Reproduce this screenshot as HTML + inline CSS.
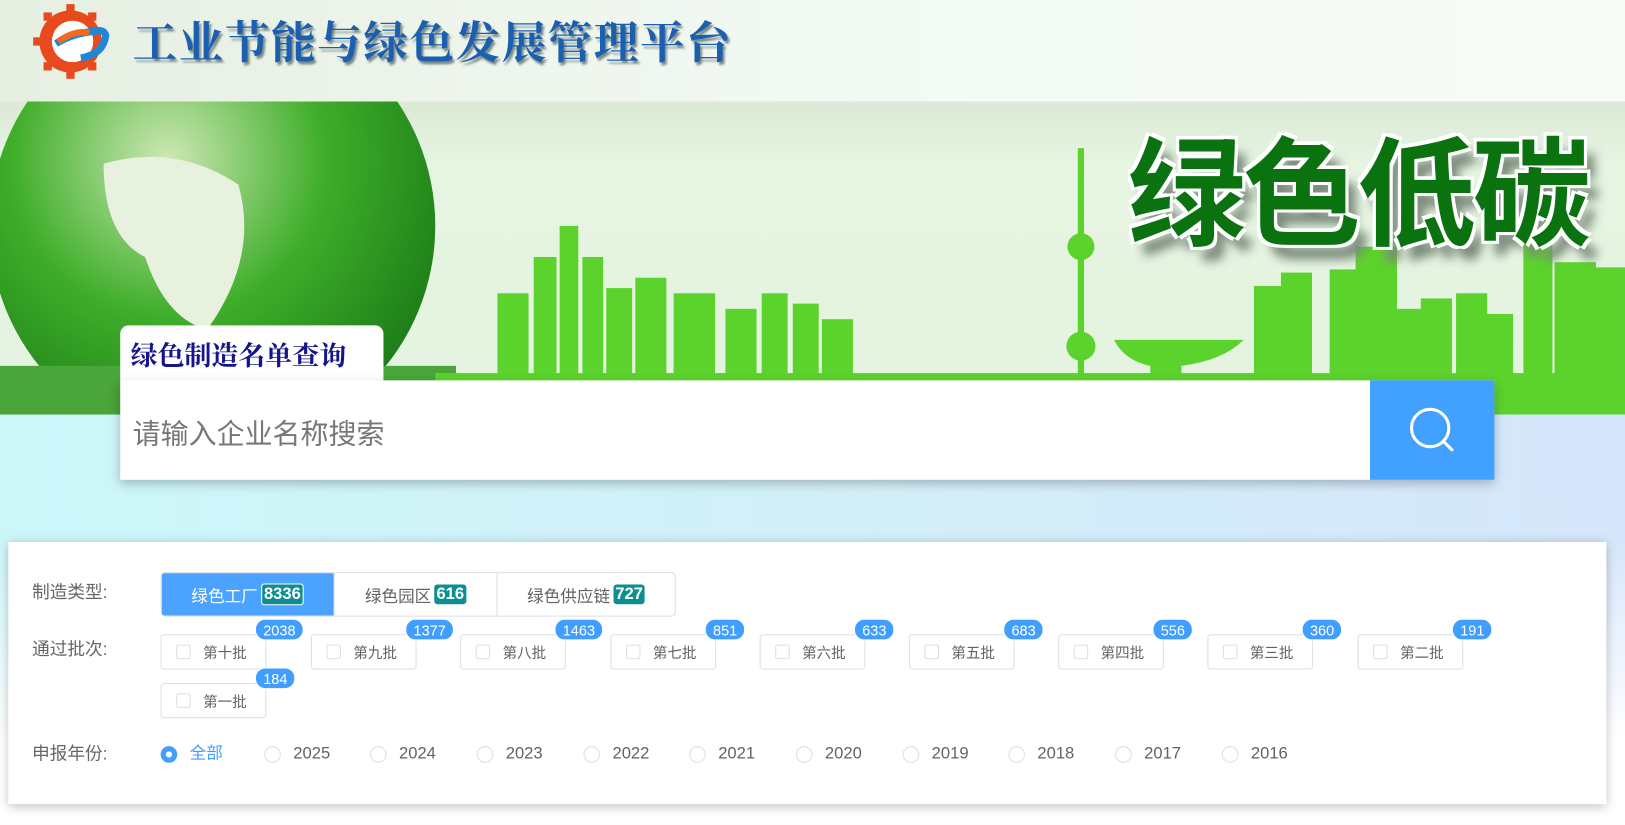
<!DOCTYPE html>
<html><head><meta charset="utf-8"><style>
*{margin:0;padding:0;box-sizing:border-box}
body{width:1625px;height:824px;overflow:hidden;position:relative;font-family:"Liberation Sans","Noto Sans CJK SC",sans-serif;background:#fff}
#w{position:absolute;left:0;top:0;width:1568px;height:796px;transform:scale(1.03635);transform-origin:0 0}
.hdr{position:absolute;left:0;top:0;width:1568px;height:98px;background:linear-gradient(90deg,#e6efe2 0%,#eef5ec 30%,#f4faf6 60%,#f6fbf8 100%)}
.ttl{position:absolute;left:128px;top:17px;font-size:43px;line-height:1;font-weight:bold;color:#1a5fb0;letter-spacing:1.5px;text-shadow:2px 3px 2px #7a8a88;font-family:"Noto Serif CJK SC","Liberation Serif",serif}
.ban{position:absolute;left:0;top:98px;width:1568px;height:304px;background:linear-gradient(180deg,#dbe9d6 0%,#e6f4e2 20%,#e4f4df 100%);overflow:hidden}
.lower{position:absolute;left:0;top:400px;width:1568px;height:396px;background:linear-gradient(90deg,#ccf7f9 0%,#d2f0f8 50%,#d6e6fb 100%)}
.lower::after{content:"";position:absolute;left:0;top:120px;width:100%;height:276px;background:linear-gradient(180deg,rgba(255,255,255,0),#fff 70%)}
.big{position:absolute;left:1088px;top:24px;line-height:1;font-size:114px;font-weight:bold;color:#0a7310;font-family:"Noto Sans CJK SC",sans-serif;text-shadow:3px 3px 0 #fff,-3px -3px 0 #fff,3px -3px 0 #fff,-3px 3px 0 #fff,10px 14px 10px #7a8a7a;letter-spacing:-3px}
.tab{position:absolute;left:116px;top:314px;width:254px;height:54px;background:#fff;border-radius:8px 8px 0 0;font-size:26px;font-weight:bold;color:#14148c;padding:12px 0 0 10px;line-height:1.2;font-family:"Noto Serif CJK SC",serif}
.sbox{position:absolute;left:116px;top:367px;width:1326px;height:96px;background:#fff;box-shadow:0 4px 10px rgba(0,0,0,.25)}
.sbox span{position:absolute;left:12px;top:30px;font-size:27px;color:#777}
.sbtn{position:absolute;right:0;top:0;width:120px;height:96px;background:#42a0ff}
.card{position:absolute;left:8px;top:523px;width:1542px;height:253px;background:#fff;box-shadow:0 2px 10px rgba(0,0,0,.25)}
.lbl{position:absolute;left:23px;font-size:17px;color:#666;line-height:20px}
.grp{position:absolute;left:147px;top:29px;height:43px;display:flex;border:1px solid #dcdfe6;border-radius:4px;overflow:hidden}
.grp div{height:41px;font-size:16px;color:#606266;display:flex;align-items:center;justify-content:center;border-left:1px solid #dcdfe6}
.grp div:first-child{border:none;background:#4ba3ff;color:#fff}
.n{background:#0e8e8e;color:#fff;font-weight:bold;border-radius:3px;padding:0 2px;margin-left:3px;font-size:16px;line-height:19px}
.first .n{border:1px solid #fff}
.cb{position:absolute;width:102px;height:34px;border:1px solid #dcdfe6;border-radius:3px;font-size:14px;color:#606266}
.cb i{position:absolute;left:14px;top:9px;width:14px;height:14px;border:1px solid #dcdfe6;border-radius:2px}
.cb span{position:absolute;left:40px;top:7px}
.bd{position:absolute;left:90px;top:-16px;background:#409eff;color:#fff;font-size:14px;font-weight:normal;height:21px;line-height:20px;padding:0 7px;border-radius:10px;border:1px solid #fff;white-space:nowrap}
.rd{position:absolute;top:195px;font-size:16px;color:#606266;height:20px;line-height:20px}
.rd i{position:absolute;left:0;top:2px;width:16px;height:16px;border:1px solid #dcdfe6;border-radius:50%}
.rd span{position:absolute;left:28px;top:0;white-space:nowrap}
</style></head><body><div id="w">
<div class="hdr">
<svg style="position:absolute;left:30px;top:2px" width="80" height="76" viewBox="0 0 80 76">
<g fill="#e8491d"><circle cx="38" cy="38" r="30"/>
<rect x="34" y="2" width="8" height="8"/><rect x="34" y="66" width="8" height="8"/><rect x="2" y="34" width="8" height="8"/>
<rect x="12" y="10" width="8" height="8"/><rect x="12" y="58" width="8" height="8"/><rect x="55" y="10" width="8" height="8"/><rect x="55" y="58" width="8" height="8"/></g>
<circle cx="40" cy="38" r="20" fill="#fff"/>
<path d="M24 40 Q40 30 62 28 Q70 26 72 32 Q70 50 48 54" fill="none" stroke="#1e88d6" stroke-width="7"/>
<path d="M26 38 Q44 26 56 30" fill="none" stroke="#f36a1f" stroke-width="6"/>
</svg>
<div class="ttl">工业节能与绿色发展管理平台</div>
</div>
<div class="ban">
<svg width="1568" height="304" style="position:absolute;left:0;top:0">
<defs><radialGradient id="g" cx="0.4" cy="0.35" r="0.7"><stop offset="0" stop-color="#cde8b4"/><stop offset="0.5" stop-color="#3fae2a"/><stop offset="1" stop-color="#1a7a16"/></radialGradient></defs>
<circle cx="205" cy="120" r="215" fill="url(#g)"/>
<path d="M100 60 Q170 40 230 80 Q250 150 200 220 Q160 210 140 150 Q100 130 100 60Z" fill="#e8f1de"/>
<rect x="0" y="255" width="440" height="49" fill="#4aa53a"/>
<g fill="#5cd22c">
<rect x="480" y="185" width="30" height="119"/><rect x="515" y="150" width="22" height="154"/><rect x="540" y="120" width="18" height="184"/><rect x="562" y="150" width="20" height="154"/><rect x="585" y="180" width="25" height="124"/><rect x="613" y="170" width="30" height="134"/><rect x="650" y="185" width="40" height="119"/><rect x="700" y="200" width="30" height="104"/><rect x="735" y="185" width="25" height="119"/><rect x="765" y="195" width="25" height="109"/><rect x="793" y="210" width="30" height="94"/>
<rect x="1040" y="45" width="6" height="250"/><circle cx="1043" cy="140" r="13"/><circle cx="1043" cy="236" r="14"/>
<path d="M1075 230 L1200 230 Q1180 250 1140 255 L1140 304 L1110 304 L1110 255 Q1085 250 1075 230Z"/>
<rect x="1210" y="178" width="30" height="126"/><rect x="1236" y="165" width="30" height="139"/><rect x="1283" y="162" width="30" height="142"/><rect x="1308" y="140" width="40" height="164"/><rect x="1340" y="200" width="32" height="104"/><rect x="1371" y="190" width="30" height="114"/><rect x="1405" y="185" width="30" height="119"/><rect x="1420" y="205" width="40" height="99"/><rect x="1470" y="135" width="28" height="169"/><rect x="1500" y="155" width="40" height="149"/><rect x="1540" y="160" width="30" height="144"/>
<rect x="420" y="262" width="1150" height="42"/>
</g>
</svg>
<div class="big">绿色低碳</div>
</div>
<div class="lower"></div>
<div class="tab">绿色制造名单查询</div>
<div class="sbox"><span>请输入企业名称搜索</span>
<div class="sbtn"><svg width="120" height="96"><circle cx="58" cy="46" r="18" fill="none" stroke="#fff" stroke-width="3"/><line x1="71" y1="59" x2="79" y2="67" stroke="#fff" stroke-width="3" stroke-linecap="round"/></svg></div></div>
<div class="card">
<div class="lbl" style="top:39px">制造类型:</div>
<div class="grp"><div class="first" style="width:166px">绿色工厂<span class="n">8336</span></div><div style="width:157px">绿色园区<span class="n">616</span></div><div style="width:172px">绿色供应链<span class="n">727</span></div></div>
<div class="lbl" style="top:94px">通过批次:</div>
<div class="cb" style="left:147px;top:89px"><i></i><span>第十批</span><b class="bd">2038</b></div>
<div class="cb" style="left:292px;top:89px"><i></i><span>第九批</span><b class="bd">1377</b></div>
<div class="cb" style="left:436px;top:89px"><i></i><span>第八批</span><b class="bd">1463</b></div>
<div class="cb" style="left:581px;top:89px"><i></i><span>第七批</span><b class="bd">851</b></div>
<div class="cb" style="left:725px;top:89px"><i></i><span>第六批</span><b class="bd">633</b></div>
<div class="cb" style="left:869px;top:89px"><i></i><span>第五批</span><b class="bd">683</b></div>
<div class="cb" style="left:1013px;top:89px"><i></i><span>第四批</span><b class="bd">556</b></div>
<div class="cb" style="left:1157px;top:89px"><i></i><span>第三批</span><b class="bd">360</b></div>
<div class="cb" style="left:1302px;top:89px"><i></i><span>第二批</span><b class="bd">191</b></div>
<div class="cb" style="left:147px;top:136px"><i></i><span>第一批</span><b class="bd">184</b></div>
<div class="lbl" style="top:195px">申报年份:</div>
<div class="rd" style="left:147px"><i style="border:5px solid #409eff;background:#fff"></i><span style="color:#409eff">全部</span></div>
<div class="rd" style="left:247px"><i></i><span>2025</span></div>
<div class="rd" style="left:349px"><i></i><span>2024</span></div>
<div class="rd" style="left:452px"><i></i><span>2023</span></div>
<div class="rd" style="left:555px"><i></i><span>2022</span></div>
<div class="rd" style="left:657px"><i></i><span>2021</span></div>
<div class="rd" style="left:760px"><i></i><span>2020</span></div>
<div class="rd" style="left:863px"><i></i><span>2019</span></div>
<div class="rd" style="left:965px"><i></i><span>2018</span></div>
<div class="rd" style="left:1068px"><i></i><span>2017</span></div>
<div class="rd" style="left:1171px"><i></i><span>2016</span></div>
</div>
</div></body></html>
